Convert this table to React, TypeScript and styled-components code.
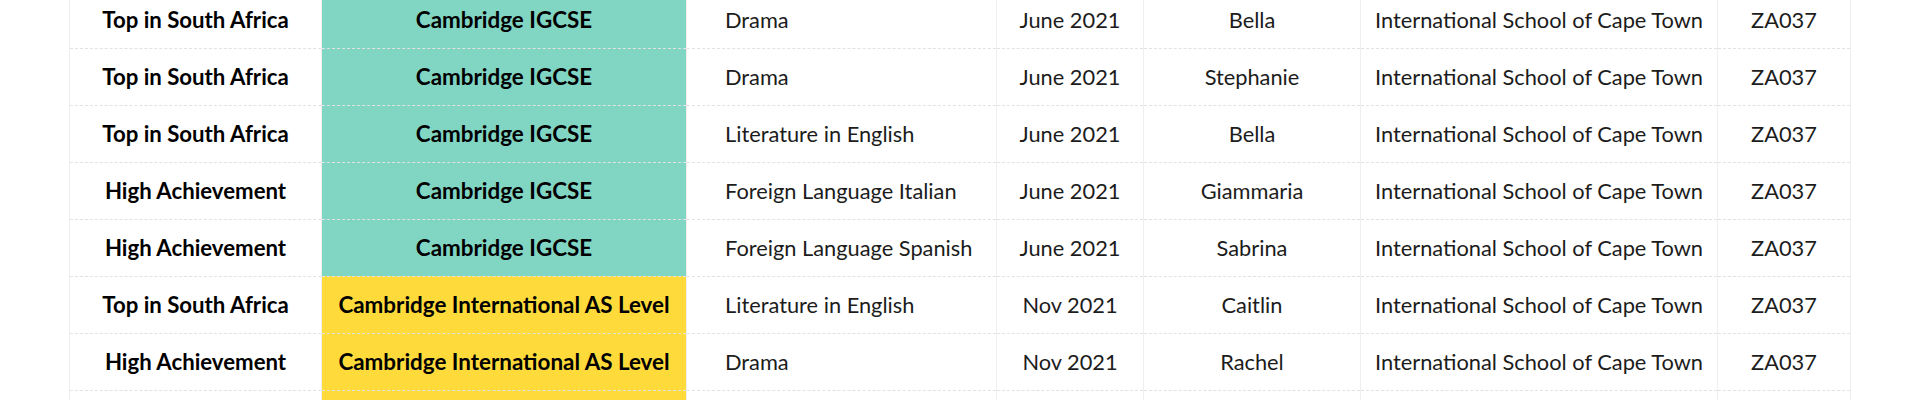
import styled, { createGlobalStyle } from 'styled-components';

type Level = 'igcse' | 'as';

type Award = {
  award: string;
  level: Level;
  subject: string;
  session: string;
  name: string;
  school: string;
  centre: string;
};

const LEVEL_LABEL: Record<Level, string> = {
  igcse: 'Cambridge IGCSE',
  as: 'Cambridge International AS Level',
};

const SCHOOL = 'International School of Cape Town';

const rows: Award[] = [
  { award: 'Top in South Africa', level: 'igcse', subject: 'Drama', session: 'June 2021', name: 'Bella', school: SCHOOL, centre: 'ZA037' },
  { award: 'Top in South Africa', level: 'igcse', subject: 'Drama', session: 'June 2021', name: 'Stephanie', school: SCHOOL, centre: 'ZA037' },
  { award: 'Top in South Africa', level: 'igcse', subject: 'Literature in English', session: 'June 2021', name: 'Bella', school: SCHOOL, centre: 'ZA037' },
  { award: 'High Achievement', level: 'igcse', subject: 'Foreign Language Italian', session: 'June 2021', name: 'Giammaria', school: SCHOOL, centre: 'ZA037' },
  { award: 'High Achievement', level: 'igcse', subject: 'Foreign Language Spanish', session: 'June 2021', name: 'Sabrina', school: SCHOOL, centre: 'ZA037' },
  { award: 'Top in South Africa', level: 'as', subject: 'Literature in English', session: 'Nov 2021', name: 'Caitlin', school: SCHOOL, centre: 'ZA037' },
  { award: 'High Achievement', level: 'as', subject: 'Drama', session: 'Nov 2021', name: 'Rachel', school: SCHOOL, centre: 'ZA037' },
  { award: '', level: 'as', subject: '', session: '', name: '', school: '', centre: '' },
];

const GlobalStyle = createGlobalStyle`
  body {
    margin: 0;
    background: #ffffff;
    font-family: Lato, "Open Sans", sans-serif;
    overflow: hidden;
  }
`;

const Page = styled.div`
  display: flex;
  justify-content: center;
  margin-top: -9px;
`;

const Table = styled.table`
  border-collapse: collapse;
  table-layout: fixed;
  width: 1781px;
`;

const Row = styled.tr`
  height: 57px;
  border-bottom: 1px dashed #e2e2e2;
`;

const Cell = styled.td<{ $align?: 'left' | 'center' }>`
  padding: 0 10px;
  border-left: 1px solid #efefef;
  border-right: 1px solid #efefef;
  font-size: 21.8px;
  color: #1c1c1c;
  text-align: ${(p) => p.$align ?? 'center'};
  white-space: nowrap;
  vertical-align: middle;
`;

const AwardCell = styled(Cell)`
  font-size: 22.2px;
  font-weight: 700;
  color: #000;
`;

const LevelCell = styled(Cell)<{ $level: Level }>`
  font-size: 22.4px;
  font-weight: 700;
  color: #000;
  background: ${(p) => (p.$level === 'igcse' ? '#81d5c3' : '#fedb3b')};
  border-left-color: #d6d6d6;
`;

const SubjectCell = styled(Cell)`
  padding-left: 38px;
`;

const widths = [252, 365, 310, 147, 217, 357, 133];

export default function App() {
  return (
    <>
      <GlobalStyle />
      <Page>
        <Table>
          <colgroup>
            {widths.map((w, i) => (
              <col key={i} style={{ width: w }} />
            ))}
          </colgroup>
          <tbody>
            {rows.map((r, i) => (
              <Row key={i}>
                <AwardCell>{r.award}</AwardCell>
                <LevelCell $level={r.level}>{r.award ? LEVEL_LABEL[r.level] : ''}</LevelCell>
                <SubjectCell $align="left">{r.subject}</SubjectCell>
                <Cell>{r.session}</Cell>
                <Cell>{r.name}</Cell>
                <Cell>{r.school}</Cell>
                <Cell>{r.centre}</Cell>
              </Row>
            ))}
          </tbody>
        </Table>
      </Page>
    </>
  );
}
